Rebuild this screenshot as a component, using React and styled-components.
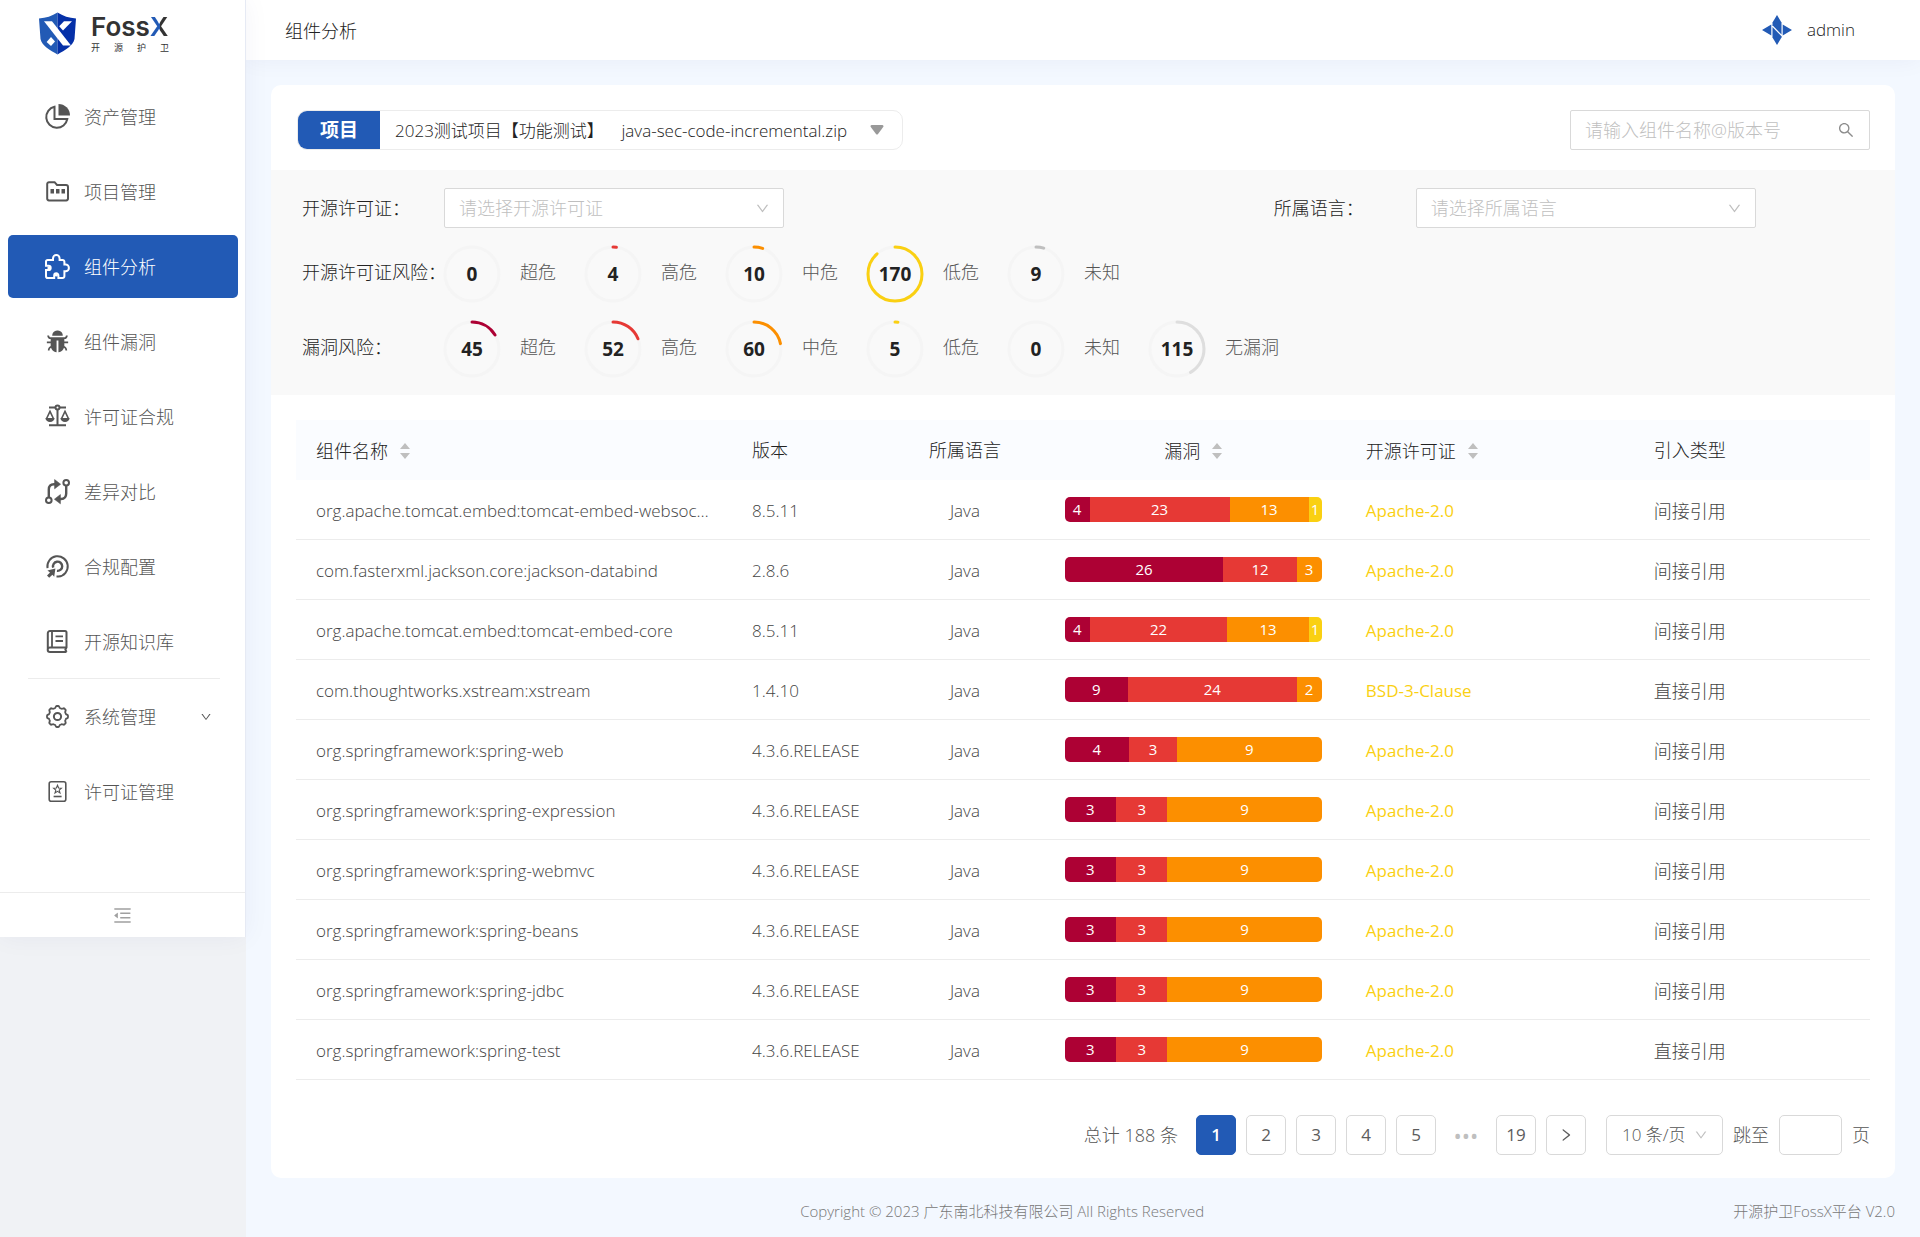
import React, { useState } from "react";
import styled, { createGlobalStyle } from "styled-components";
import {
  AiFillBug,
  AiOutlineDown,
  AiOutlineMenuFold,
  AiOutlineRight,
  AiOutlineSearch
} from "react-icons/ai";

const BLUE = "#225ab5";
const LEVELS = ["#ad0134", "#e63935", "#fc8f00", "#fad012", "#bfbfbf", "#dedede"];

const licenseRisks = [
  { label: "超危", count: 0, color: LEVELS[0] },
  { label: "高危", count: 4, color: LEVELS[1] },
  { label: "中危", count: 10, color: LEVELS[2] },
  { label: "低危", count: 170, color: LEVELS[3] },
  { label: "未知", count: 9, color: LEVELS[4] }
];

const vulnRisks = [
  { label: "超危", count: 45, color: LEVELS[0] },
  { label: "高危", count: 52, color: LEVELS[1] },
  { label: "中危", count: 60, color: LEVELS[2] },
  { label: "低危", count: 5, color: LEVELS[3] },
  { label: "未知", count: 0, color: LEVELS[4] },
  { label: "无漏洞", count: 115, color: LEVELS[5] }
];

const components = [
  ["org.apache.tomcat.embed:tomcat-embed-websocket", "8.5.11", [4, 23, 13, 1], "Apache-2.0", "间接引用"],
  ["com.fasterxml.jackson.core:jackson-databind", "2.8.6", [26, 12, 3], "Apache-2.0", "间接引用"],
  ["org.apache.tomcat.embed:tomcat-embed-core", "8.5.11", [4, 22, 13, 1], "Apache-2.0", "间接引用"],
  ["com.thoughtworks.xstream:xstream", "1.4.10", [9, 24, 2], "BSD-3-Clause", "直接引用"],
  ["org.springframework:spring-web", "4.3.6.RELEASE", [4, 3, 9], "Apache-2.0", "间接引用"],
  ["org.springframework:spring-expression", "4.3.6.RELEASE", [3, 3, 9], "Apache-2.0", "间接引用"],
  ["org.springframework:spring-webmvc", "4.3.6.RELEASE", [3, 3, 9], "Apache-2.0", "间接引用"],
  ["org.springframework:spring-beans", "4.3.6.RELEASE", [3, 3, 9], "Apache-2.0", "间接引用"],
  ["org.springframework:spring-jdbc", "4.3.6.RELEASE", [3, 3, 9], "Apache-2.0", "间接引用"],
  ["org.springframework:spring-test", "4.3.6.RELEASE", [3, 3, 9], "Apache-2.0", "直接引用"]
];

// closed wavy outline with 8 lobes
const gearPath = () => {
  const points = [];
  for (let i = 0; i < 96; i++) {
    const a = (i / 96) * Math.PI * 2;
    const wave = Math.max(-0.6, Math.min(0.6, Math.cos(a * 8)));
    const r = 9.6 + wave * 1.5;
    points.push(
      `${(12.5 + r * Math.sin(a)).toFixed(2)} ${(12.5 - r * Math.cos(a)).toFixed(2)}`
    );
  }
  return `M${points.join("L")}Z`;
};

const icons = {
  asset: (
    <>
      <path d="M9.5 2.8V15H22.3A10.6 10.6 0 1 1 9.5 2.8Z" />
      <path d="M13.5 0A11.5 11.5 0 0 1 25 11.5H13.5Z" fill="currentColor" stroke="none" />
    </>
  ),
  project: (
    <>
      <path d="M2.2 5A1.8 1.8 0 0 1 4 3.2H9.6L12 6H21A2 2 0 0 1 23 8V19.6A1.8 1.8 0 0 1 21.2 21.4H4A1.8 1.8 0 0 1 2.2 19.6Z" />
      <path d="M5.5 10H9V14.5H5.5ZM11 10H14.5V14.5H11ZM16.5 10H20V14.5H16.5Z" fill="currentColor" stroke="none" />
    </>
  ),
  puzzle: (
    <>
      <path d="M2.6 6H8V4.4A3.3 3.3 0 0 1 14.6 4.4V6H17.6A1.8 1.8 0 0 1 19.4 7.8V10.6H20.6A3.3 3.3 0 0 1 20.6 17.2H19.4V22.2A1.8 1.8 0 0 1 17.6 24H13.4V21.4A2.1 2.1 0 0 0 9.2 21.4V24H2.8A1.8 1.8 0 0 1 1 22.2V16H3.6A2.1 2.1 0 0 0 3.6 11.8H1V7.6A1.6 1.6 0 0 1 2.6 6Z" />
      <circle cx="4" cy="13.9" r="1.6" fill="currentColor" stroke="none" />
      <circle cx="11.3" cy="21" r="1.6" fill="currentColor" stroke="none" />
    </>
  ),
  scale: (
    <>
      <path d="M4 3.5H10M15 3.5H21M12.5 5.5V21M4 21.2H21" />
      <circle cx="12.5" cy="3.6" r="2" />
      <path d="M1.6 14.5L5 7.4L8.4 14.5M16.6 14.5L20 7.4L23.4 14.5" strokeWidth="1.6" />
      <path d="M0.4 14H9.6A4.6 4 0 0 1 0.4 14ZM15.4 14H24.6A4.6 4 0 0 1 15.4 14Z" fill="currentColor" stroke="none" />
    </>
  ),
  compare: (
    <>
      <circle cx="3.8" cy="21.2" r="2.8" />
      <circle cx="21.2" cy="3.8" r="2.8" />
      <path d="M3.8 18.4V10.5Q3.8 5.4 9 5.2H10.5M21.2 6.6V14.5Q21.2 19.8 16 20H14.5" strokeWidth="2.4" />
      <path d="M9.6 0.6L15.6 5.2L9.6 9.8ZM15.4 15.6L9.4 20.2L15.4 24.8Z" fill="currentColor" stroke="currentColor" strokeWidth="0.6" />
    </>
  ),
  target: (
    <>
      <path d="M2.5 14.2A10.2 10.2 0 1 1 13.5 22.6H11.5" />
      <path d="M8.2 13.6A4.6 4.6 0 1 1 12 16.8" strokeWidth="2.4" />
      <path d="M10.4 14.4L9.2 22.8L7.4 20.8L4.2 23.8L2 21.4L5 18.4L2.4 16.4Z" fill="currentColor" stroke="none" />
    </>
  ),
  book: (
    <>
      <path d="M21.5 18.4H5A2.2 2.2 0 0 0 5 23H21.5M2.8 20.6V4.2A2.2 2.2 0 0 1 5 2H20A1.5 1.5 0 0 1 21.5 3.5V18.4L20.4 20.6L21.5 23" />
      <path d="M7 2V18M10.5 7.4H18M10.5 12H18" strokeWidth="1.8" />
    </>
  ),
  gear: (
    <>
      <path d={gearPath()} strokeWidth="1.8" />
      <circle cx="12.5" cy="12.5" r="3.6" />
    </>
  ),
  license: (
    <>
      <rect x="4.2" y="2.8" width="16.6" height="19.4" rx="2" strokeWidth="1.6" />
      <path d="M12.5 6.2L13.6 9L16.4 9.2L14.2 11.1L15 14L12.5 12.4L10 14L10.8 11.1L8.6 9.2L11.4 9Z" strokeWidth="1.1" />
      <path d="M8.6 17.5H16.6" strokeWidth="1.6" />
    </>
  )
};

function MenuIcon({ name }) {
  if (name === "bug") return <AiFillBug size={25} />;
  return (
    <svg width="25" height="25" viewBox="0 0 25 25" fill="none" stroke="currentColor" strokeWidth="2" overflow="visible">
      {icons[name]}
    </svg>
  );
}

function ShieldLogo() {
  return (
    <svg width="37" height="43" viewBox="0 0 37 43">
      <path d="M18.5 0.5C13 4 7 6 0 6.5L1.5 27C3 34 11 38 18.5 42.5Z" fill="#225ab5" />
      <path d="M18.5 0.5C24 4 30 6 37 6.5L35.5 27C34 34 26 38 18.5 42.5Z" fill="#0530a8" />
      <path d="M5 9.2H13L32 33.5H24Z" fill="#fff" />
      <path d="M25 9.2H33L24 18.6L20.2 14.2Z" fill="#fff" />
      <path d="M12 25L16 29.6L12 34L7.6 30Z" fill="#fff" />
    </svg>
  );
}

function UserLogo() {
  return (
    <svg width="30" height="30" viewBox="0 0 30 30" fill={BLUE}>
      <path d="M0 15L9.3 9.6V20.4ZM30 15L20.7 9.6V20.4Z" />
      <path d="M10.5 7.5L15 0L19.5 7.5V19.5L10.5 10.2Z" />
      <path d="M10.5 12V22.5L15 30L19.5 22.5V21.2Z" />
    </svg>
  );
}

function RiskRing({ count, total, color }) {
  const length = 2 * Math.PI * 27;
  return (
    <Ring>
      <svg width="58" height="58" viewBox="0 0 58 58" fill="none" strokeWidth="3">
        <circle cx="29" cy="29" r="27" stroke="#f5f5f5" />
        {count > 0 && (
          <circle
            cx="29"
            cy="29"
            r="27"
            stroke={color}
            strokeLinecap="round"
            strokeDasharray={`${(count / total) * length} ${length}`}
            transform="rotate(-90 29 29)"
          />
        )}
      </svg>
      <RingCount>{count}</RingCount>
    </Ring>
  );
}

function RiskRow({ title, risks }) {
  const total = risks.reduce((sum, risk) => sum + risk.count, 0);
  return (
    <RiskLine>
      <RiskTitle>{title}</RiskTitle>
      {risks.map(risk => (
        <RiskItem key={risk.label}>
          <RiskRing count={risk.count} total={total} color={risk.color} />
          <RiskLabel>{risk.label}</RiskLabel>
        </RiskItem>
      ))}
    </RiskLine>
  );
}

function Sorter() {
  return (
    <svg width="10" height="20" viewBox="0 0 10 20" fill="#bfbfbf">
      <path d="M5 2L10 8H0ZM5 18L10 12H0Z" />
    </svg>
  );
}

function MenuEntry({ icon, text, active, arrow, onSelect }) {
  return (
    <li>
      <MenuLink
        href="#"
        $active={active === text}
        onClick={e => {
          e.preventDefault();
          onSelect(text);
        }}
      >
        <MenuIcon name={icon} />
        <MenuText>{text}</MenuText>
        {arrow && <AiOutlineDown size={12} />}
      </MenuLink>
    </li>
  );
}

function App() {
  const [active, setActive] = useState("组件分析");
  const [page, setPage] = useState(1);
  const [keyword, setKeyword] = useState("");

  return (
    <Layout>
      <GlobalStyle />
      <Sider>
        <SiderPanel>
          <Brand>
            <ShieldLogo />
            <BrandText>
              <BrandName>
                Foss<BrandX>X</BrandX>
              </BrandName>
              <BrandSub>
                <span>开</span>
                <span>源</span>
                <span>护</span>
                <span>卫</span>
              </BrandSub>
            </BrandText>
          </Brand>
          <nav>
            <Menu>
              <MenuEntry icon="asset" text="资产管理" active={active} onSelect={setActive} />
              <MenuEntry icon="project" text="项目管理" active={active} onSelect={setActive} />
              <MenuEntry icon="puzzle" text="组件分析" active={active} onSelect={setActive} />
              <MenuEntry icon="bug" text="组件漏洞" active={active} onSelect={setActive} />
              <MenuEntry icon="scale" text="许可证合规" active={active} onSelect={setActive} />
              <MenuEntry icon="compare" text="差异对比" active={active} onSelect={setActive} />
              <MenuEntry icon="target" text="合规配置" active={active} onSelect={setActive} />
              <MenuEntry icon="book" text="开源知识库" active={active} onSelect={setActive} />
            </Menu>
            <Menu $bordered>
              <MenuEntry icon="gear" text="系统管理" active={active} onSelect={setActive} arrow />
              <MenuEntry icon="license" text="许可证管理" active={active} onSelect={setActive} />
            </Menu>
          </nav>
          <CollapseButton type="button" aria-label="收起菜单">
            <AiOutlineMenuFold size={21} />
          </CollapseButton>
        </SiderPanel>
      </Sider>

      <Main>
        <Header>
          <PageTitle>组件分析</PageTitle>
          <User>
            <UserLogo />
            admin
          </User>
        </Header>

        <Card>
          <Toolbar>
            <ProjectPicker>
              <ProjectTag htmlFor="project">项目</ProjectTag>
              <ProjectSelect id="project">
                <option>2023测试项目【功能测试】&nbsp;&nbsp;&nbsp;&nbsp;java-sec-code-incremental.zip</option>
              </ProjectSelect>
              <svg width="14" height="10" viewBox="0 0 14 10" fill="#999">
                <path d="M1.5 0H12.5Q14 0.4 13.4 1.8L8 9Q7 10 6 9L0.6 1.8Q0 0.4 1.5 0Z" />
              </svg>
            </ProjectPicker>
            <SearchBox>
              <SearchInput
                type="text"
                aria-label="搜索组件"
                placeholder="请输入组件名称@版本号"
                value={keyword}
                onChange={e => setKeyword(e.target.value)}
              />
              <SearchButton type="button" aria-label="搜索">
                <AiOutlineSearch size={18} />
              </SearchButton>
            </SearchBox>
          </Toolbar>

          <Filters>
            <SelectLine>
              <Field>
                <FilterLabel htmlFor="license">开源许可证：</FilterLabel>
                <SelectBox>
                  <PlainSelect id="license">
                    <option>请选择开源许可证</option>
                  </PlainSelect>
                  <AiOutlineDown size={15} />
                </SelectBox>
              </Field>
              <Field>
                <FilterLabel htmlFor="language">所属语言：</FilterLabel>
                <SelectBox>
                  <PlainSelect id="language">
                    <option>请选择所属语言</option>
                  </PlainSelect>
                  <AiOutlineDown size={15} />
                </SelectBox>
              </Field>
            </SelectLine>
            <RiskRow title="开源许可证风险：" risks={licenseRisks} />
            <RiskRow title="漏洞风险：" risks={vulnRisks} />
          </Filters>

          <TableWrap>
            <Table>
              <colgroup>
                <Col $width="27.7%" />
                <Col $width="10%" />
                <Col $width="9.6%" />
                <Col $width="19.4%" />
                <Col $width="18.3%" />
                <Col $width="15%" />
              </colgroup>
              <thead>
                <tr>
                  <Th>
                    <SortButton type="button">
                      组件名称 <Sorter />
                    </SortButton>
                  </Th>
                  <Th>版本</Th>
                  <Th $center>所属语言</Th>
                  <Th $center>
                    <SortButton type="button">
                      漏洞 <Sorter />
                    </SortButton>
                  </Th>
                  <Th>
                    <SortButton type="button">
                      开源许可证 <Sorter />
                    </SortButton>
                  </Th>
                  <Th>引入类型</Th>
                </tr>
              </thead>
              <tbody>
                {components.map(([name, version, vulns, license, type]) => (
                  <tr key={name}>
                    <Td>{name}</Td>
                    <Td>{version}</Td>
                    <Td $center>Java</Td>
                    <BarTd>
                      <VulnBar>
                        {vulns.map((count, i) => (
                          <VulnPart key={i} $color={LEVELS[i]} $count={count}>
                            {count}
                          </VulnPart>
                        ))}
                      </VulnBar>
                    </BarTd>
                    <LicenseTd>{license}</LicenseTd>
                    <TypeTd>{type}</TypeTd>
                  </tr>
                ))}
              </tbody>
            </Table>
          </TableWrap>

          <Pagination>
            <PageTotal>总计 188 条</PageTotal>
            <Pages>
              {[1, 2, 3, 4, 5].map(n => (
                <PageButton key={n} type="button" $active={n === page} onClick={() => setPage(n)}>
                  {n}
                </PageButton>
              ))}
              <PageDots>•••</PageDots>
              <PageButton type="button" $active={page === 19} onClick={() => setPage(19)}>
                19
              </PageButton>
              <PageButton type="button" aria-label="下一页" onClick={() => setPage(page + 1)}>
                <AiOutlineRight size={16} />
              </PageButton>
            </Pages>
            <SizeBox>
              <SizeSelect aria-label="每页条数">
                <option>10 条/页</option>
              </SizeSelect>
              <AiOutlineDown size={14} />
            </SizeBox>
            <Jump>
              跳至
              <JumpInput type="text" aria-label="页码" />
              页
            </Jump>
          </Pagination>
        </Card>

        <Footer>
          <span />
          <span>Copyright © 2023 广东南北科技有限公司 All Rights Reserved</span>
          <span>开源护卫FossX平台 V2.0</span>
        </Footer>
      </Main>
    </Layout>
  );
}

const GlobalStyle = createGlobalStyle`
  *, *::before, *::after {
    box-sizing: border-box;
  }
  body {
    margin: 0;
    background: #f0f2f5;
    color: #222;
    font-family: "Open Sans", "Noto Sans CJK SC", sans-serif;
    font-size: 17px;
    font-weight: 300;
    line-height: 24px;
  }
  button, input, select {
    font: inherit;
    color: inherit;
    margin: 0;
  }
  svg {
    display: block;
    flex: none;
  }
`;

const Layout = styled.div`
  display: flex;
  min-height: 100vh;
`;
const Sider = styled.aside`
  flex: none;
  width: 246px;
`;
const SiderPanel = styled.div`
  position: relative;
  background: #fff;
  border-right: 1px solid #e6eaf4;
  box-shadow: 0 0 25px rgba(30, 40, 120, 0.05);
`;
const Brand = styled.div`
  display: flex;
  gap: 15px;
  height: 85px;
  padding: 12px 0 0 39px;
`;
const BrandText = styled.div`
  width: 78px;
`;
const BrandName = styled.div`
  font-family: Inter, sans-serif;
  font-size: 26px;
  font-weight: 600;
  line-height: 30px;
  color: #333;
`;
const BrandX = styled.span`
  background: linear-gradient(90deg, ${BLUE} 55%, #333 55%);
  background-clip: text;
  color: transparent;
`;
const BrandSub = styled.div`
  display: flex;
  justify-content: space-between;
  font-size: 9px;
  font-weight: 400;
  line-height: 12px;
  color: #333;
`;
const Menu = styled.ul`
  display: grid;
  gap: 12px;
  margin: ${props => (props.$bordered ? "5px 25px 0 28px" : "0")};
  padding: ${props => (props.$bordered ? "6px 0 69px" : "0")};
  border-top: ${props => (props.$bordered ? "1px solid #ececec" : "none")};
  list-style: none;

  li {
    margin: 0 ${props => (props.$bordered ? "-18px" : "7px")} 0
      ${props => (props.$bordered ? "-20px" : "8px")};
  }
`;
const MenuLink = styled.a`
  display: flex;
  align-items: center;
  gap: 14px;
  height: 63px;
  padding: 0 26px 0 37px;
  border-radius: 5px;
  background: ${props => (props.$active ? BLUE : "transparent")};
  color: ${props => (props.$active ? "#fff" : "#555")};
  font-size: 18px;
  text-decoration: none;
`;
const MenuText = styled.span`
  flex: 1;
`;
const CollapseButton = styled.button`
  display: flex;
  align-items: center;
  justify-content: center;
  width: 100%;
  height: 45px;
  padding: 0;
  border: none;
  border-top: 1px solid #ececec;
  background: none;
  color: #a0a0a0;
`;
const Main = styled.main`
  flex: 1;
  display: flex;
  flex-direction: column;
  min-width: 0;
  background: #f3f8ff;
`;
const Header = styled.header`
  display: flex;
  align-items: center;
  justify-content: space-between;
  height: 60px;
  padding: 0 65px 0 39px;
  background: #fff;
  box-shadow: 0 0 25px rgba(30, 40, 120, 0.05);
`;
const PageTitle = styled.h1`
  margin: 0;
  padding-top: 2px;
  font-size: 18px;
  font-weight: 300;
`;
const User = styled.div`
  display: flex;
  align-items: center;
  gap: 15px;
`;
const Card = styled.section`
  margin: 25px 25px 0;
  border-radius: 10px;
  background: #fff;
`;
const Toolbar = styled.div`
  display: flex;
  align-items: center;
  justify-content: space-between;
  padding: 25px 25px 20px;
`;
const ProjectPicker = styled.div`
  display: flex;
  align-items: center;
  height: 40px;
  margin-left: 1px;
  padding-right: 18px;
  border: 1px solid #ececec;
  border-radius: 10px;
  overflow: hidden;
`;
const ProjectTag = styled.label`
  align-self: stretch;
  padding: 0 22px;
  background: ${BLUE};
  color: #fff;
  font-size: 19px;
  font-weight: 700;
  line-height: 38px;
`;
const ProjectSelect = styled.select`
  appearance: none;
  height: 38px;
  padding: 2px 22px 0 15px;
  border: none;
  background: none;
`;
const SearchBox = styled.div`
  display: flex;
  align-items: center;
  width: 300px;
  height: 40px;
  padding: 0 14px;
  border: 1px solid #d9d9d9;
  border-radius: 2px;
`;
const SearchInput = styled.input`
  flex: 1;
  min-width: 0;
  padding: 0;
  border: none;
  outline: none;
  background: none;
  font-size: 18px;

  &::placeholder {
    color: #bfbfbf;
  }
`;
const SearchButton = styled.button`
  padding: 0;
  border: none;
  background: none;
  color: #8c8c8c;
`;
const Filters = styled.div`
  padding: 18px 0 17px 31px;
  background: #f9f9f9;
`;
const SelectLine = styled.div`
  display: grid;
  grid-template-columns: 61fr 39fr;
  margin-bottom: 17px;
`;
const Field = styled.div`
  display: flex;
  align-items: center;
`;
const FilterLabel = styled.label`
  flex: none;
  width: 142px;
  font-size: 18px;
  white-space: nowrap;
`;
const SelectBox = styled.div`
  display: flex;
  align-items: center;
  width: 340px;
  height: 40px;
  padding-right: 13px;
  border: 1px solid #d9d9d9;
  border-radius: 2px;
  background: #fff;
  color: #bfbfbf;
`;
const PlainSelect = styled.select`
  appearance: none;
  flex: 1;
  height: 38px;
  padding: 0 14px;
  border: none;
  background: none;
  color: #bfbfbf;
  font-size: 18px;
`;
const RiskLine = styled.div`
  display: flex;
  align-items: center;
  height: 58px;

  & + & {
    margin-top: 17px;
  }
`;
const RiskTitle = styled.span`
  flex: none;
  width: 141px;
  padding-bottom: 4px;
  font-size: 18px;
  white-space: nowrap;
`;
const RiskItem = styled.div`
  display: flex;
  align-items: center;
  gap: 19px;
  width: 141px;
`;
const RiskLabel = styled.span`
  padding-bottom: 4px;
  color: #555;
  font-size: 18px;
  white-space: nowrap;
`;
const Ring = styled.div`
  display: grid;
  place-items: center;

  & > * {
    grid-area: 1 / 1;
  }
`;
const RingCount = styled.span`
  font-size: 19px;
  font-weight: 700;
`;
const TableWrap = styled.div`
  padding: 25px 25px 0;
`;
const Table = styled.table`
  width: 100%;
  table-layout: fixed;
  border-collapse: separate;
  border-spacing: 0;
`;
const Col = styled.col`
  width: ${props => props.$width};
`;
const Th = styled.th`
  height: 60px;
  padding: 0 20px;
  background: #fafcff;
  font-size: 18px;
  font-weight: 300;
  text-align: ${props => (props.$center ? "center" : "left")};
`;
const SortButton = styled.button`
  display: inline-flex;
  align-items: center;
  gap: 12px;
  padding: 0;
  border: none;
  background: none;
  vertical-align: middle;
`;
const Td = styled.td`
  height: 60px;
  padding: 2px 20px 0;
  border-bottom: 1px solid #ececec;
  color: #444;
  text-align: ${props => (props.$center ? "center" : "left")};
  overflow: hidden;
  text-overflow: ellipsis;
  white-space: nowrap;
`;
const BarTd = styled(Td)`
  padding: 0 20px;
`;
const LicenseTd = styled(Td)`
  color: #fad012;
  font-weight: 400;
`;
const TypeTd = styled(Td)`
  font-size: 18px;
`;
const VulnBar = styled.div`
  display: flex;
  width: 257px;
  max-width: 100%;
  height: 25px;
  margin: 0 auto;
  border-radius: 5px;
  overflow: hidden;
`;
const VulnPart = styled.span`
  flex: ${props => props.$count} 1 0;
  min-width: ${props => (props.$count > 1 ? "25px" : "13px")};
  background: ${props => props.$color};
  color: #fff;
  font-size: 15px;
  font-weight: 400;
  line-height: 25px;
  text-align: center;
`;
const Pagination = styled.div`
  display: flex;
  align-items: center;
  justify-content: flex-end;
  padding: 35px 25px 23px;
  color: #555;
`;
const PageTotal = styled.span`
  margin-right: 18px;
  font-size: 18px;
`;
const Pages = styled.div`
  display: flex;
  gap: 10px;
  margin-right: 20px;
`;
const PageButton = styled.button`
  display: flex;
  align-items: center;
  justify-content: center;
  width: 40px;
  height: 40px;
  padding: 0;
  border: 1px solid ${props => (props.$active ? BLUE : "#d9d9d9")};
  border-radius: 5px;
  background: ${props => (props.$active ? BLUE : "#fff")};
  color: ${props => (props.$active ? "#fff" : "#5c5c5c")};
  font-weight: ${props => (props.$active ? 600 : 400)};
`;
const PageDots = styled.span`
  width: 40px;
  color: #bfbfbf;
  font-size: 22px;
  font-weight: 400;
  line-height: 40px;
  text-align: center;
`;
const SizeBox = styled.div`
  display: flex;
  align-items: center;
  height: 40px;
  margin-right: 10px;
  padding-right: 14px;
  border: 1px solid #d9d9d9;
  border-radius: 5px;

  svg {
    color: #bfbfbf;
  }
`;
const SizeSelect = styled.select`
  appearance: none;
  height: 38px;
  padding: 0 8px 0 15px;
  border: none;
  background: none;
`;
const Jump = styled.label`
  display: flex;
  align-items: center;
  gap: 10px;
  font-size: 18px;
`;
const JumpInput = styled.input`
  width: 63px;
  height: 40px;
  padding: 0 10px;
  border: 1px solid #d9d9d9;
  border-radius: 5px;
`;
const Footer = styled.footer`
  display: flex;
  align-items: center;
  justify-content: space-between;
  flex: 1;
  min-height: 59px;
  padding: 6px 25px 0;
  color: #777;
  font-size: 15px;
`;
export default App;
